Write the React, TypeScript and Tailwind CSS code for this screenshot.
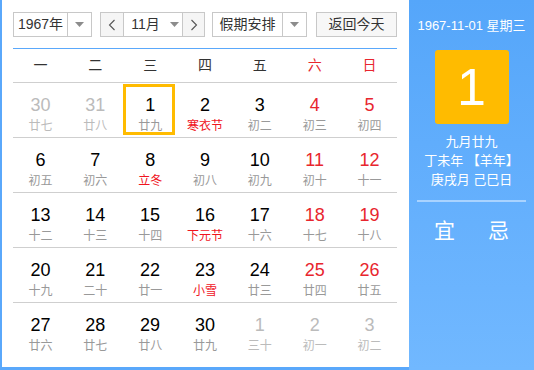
import React from "react";

type Day = { n: number; l: string; muted?: boolean; fest?: boolean; sel?: boolean };

const weeks: Day[][] = [
  [
    { n: 30, l: "廿七", muted: true },
    { n: 31, l: "廿八", muted: true },
    { n: 1, l: "廿九", sel: true },
    { n: 2, l: "寒衣节", fest: true },
    { n: 3, l: "初二" },
    { n: 4, l: "初三" },
    { n: 5, l: "初四" },
  ],
  [
    { n: 6, l: "初五" },
    { n: 7, l: "初六" },
    { n: 8, l: "立冬", fest: true },
    { n: 9, l: "初八" },
    { n: 10, l: "初九" },
    { n: 11, l: "初十" },
    { n: 12, l: "十一" },
  ],
  [
    { n: 13, l: "十二" },
    { n: 14, l: "十三" },
    { n: 15, l: "十四" },
    { n: 16, l: "下元节", fest: true },
    { n: 17, l: "十六" },
    { n: 18, l: "十七" },
    { n: 19, l: "十八" },
  ],
  [
    { n: 20, l: "十九" },
    { n: 21, l: "二十" },
    { n: 22, l: "廿一" },
    { n: 23, l: "小雪", fest: true },
    { n: 24, l: "廿三" },
    { n: 25, l: "廿四" },
    { n: 26, l: "廿五" },
  ],
  [
    { n: 27, l: "廿六" },
    { n: 28, l: "廿七" },
    { n: 29, l: "廿八" },
    { n: 30, l: "廿九" },
    { n: 1, l: "三十", muted: true },
    { n: 2, l: "初一", muted: true },
    { n: 3, l: "初二", muted: true },
  ],
];

const weekdays = ["一", "二", "三", "四", "五", "六", "日"];

const Caret = () => (
  <svg width="9" height="5" viewBox="0 0 9 5">
    <path d="M0 0H9L4.5 5Z" fill="#8c8c8c" />
  </svg>
);

const Chevron = ({ dir }: { dir: "left" | "right" }) => (
  <svg width="8" height="12" viewBox="0 0 8 12" fill="none" stroke="#555" strokeWidth="1.1">
    {dir === "left" ? <path d="M6.5 1L1.5 6L6.5 11" /> : <path d="M1.5 1L6.5 6L1.5 11" />}
  </svg>
);

const App = () => {
  return (
    <div
      className="w-[534px] h-[370px] flex border-l-2 border-[#5aa8fb] text-[#333]"
      style={{ fontFamily: '"Liberation Sans", "Noto Sans CJK SC", sans-serif' }}
    >
      <div className="w-[407px] h-full bg-white pl-[11px] pr-[12px] pt-[12px] border-b-[3px] border-[#5aa8fb]">
        <div className="flex h-[25px] text-[14px]">
          <div className="w-[79px] flex border border-[#c8c8c8]">
            <div className="flex-1 flex items-center justify-center">1967年</div>
            <div className="w-[24px] border-l border-[#c8c8c8] flex items-center justify-center">
              <Caret />
            </div>
          </div>
          <div className="ml-[8px] w-[105px] flex border border-[#c8c8c8]">
            <div className="w-[23px] bg-[#f5f5f5] border-r border-[#c8c8c8] flex items-center justify-center">
              <Chevron dir="left" />
            </div>
            <div className="flex-1 flex items-center justify-center gap-[10px] pl-[4px]">
              <span>11月</span>
              <Caret />
            </div>
            <div className="w-[22px] bg-[#f5f5f5] border-l border-[#c8c8c8] flex items-center justify-center">
              <Chevron dir="right" />
            </div>
          </div>
          <div className="ml-[7px] w-[95px] flex border border-[#c8c8c8]">
            <div className="flex-1 flex items-center justify-center">假期安排</div>
            <div className="w-[24px] border-l border-[#c8c8c8] flex items-center justify-center">
              <Caret />
            </div>
          </div>
          <div className="ml-[9px] w-[81px] border border-[#c8c8c8] bg-[#f7f7f7] flex items-center justify-center">
            返回今天
          </div>
        </div>

        <div className="mt-[11px] h-px bg-[#5aa8fb]" />

        <div className="grid grid-cols-7 h-[34px] border-b border-[#cfcfcf] text-[14px]">
          {weekdays.map((w, i) => (
            <div
              key={w}
              className={`flex items-center justify-center ${i >= 5 ? "text-[#e8262e]" : "text-[#333]"}`}
            >
              {w}
            </div>
          ))}
        </div>

        {weeks.map((week, wi) => (
          <div
            key={wi}
            className={`grid grid-cols-7 h-[55px] ${wi < weeks.length - 1 ? "border-b border-[#cfcfcf]" : ""}`}
          >
            {week.map((d, di) => {
              const numColor = d.muted ? "text-[#bbbbbb]" : di >= 5 ? "text-[#e8262e]" : "text-black";
              const lunarColor = d.muted ? "text-[#bbbbbb]" : d.fest ? "text-[#f0141e]" : "text-[#999999]";
              return (
                <div key={di} className="relative flex flex-col items-center pt-[11px]">
                  {d.sel && (
                    <div className="absolute left-0 top-px w-[52px] h-[51px] border-[3px] border-[#ffbb00]" />
                  )}
                  <div className={`text-[18px] leading-[22px] ${numColor}`}>{d.n}</div>
                  <div className={`text-[12px] leading-[18px] mt-[1px] ${lunarColor}`}>{d.l}</div>
                </div>
              );
            })}
          </div>
        ))}
      </div>

      <div className="flex-1 bg-gradient-to-b from-[#55a6fa] to-[#71b8ff] text-white flex flex-col items-center">
        <div className="mt-[17px] text-[13px] leading-[18px]">1967-11-01 星期三</div>
        <div className="mt-[15px] w-[74px] h-[74px] rounded-[3px] bg-[#ffbb00] flex items-center justify-center text-[52px] leading-none">
          1
        </div>
        <div className="mt-[8px] text-[13px] leading-[19px] text-center">
          <div>九月廿九</div>
          <div>丁未年 【羊年】</div>
          <div>庚戌月 己巳日</div>
        </div>
        <div className="mt-[11px] w-[109px] h-[2px] bg-[#a9d3ff]" />
        <div className="mt-[16px] flex gap-[33px] text-[21px] leading-[26px]">
          <span>宜</span>
          <span>忌</span>
        </div>
      </div>
    </div>
  );
};

export default App;
